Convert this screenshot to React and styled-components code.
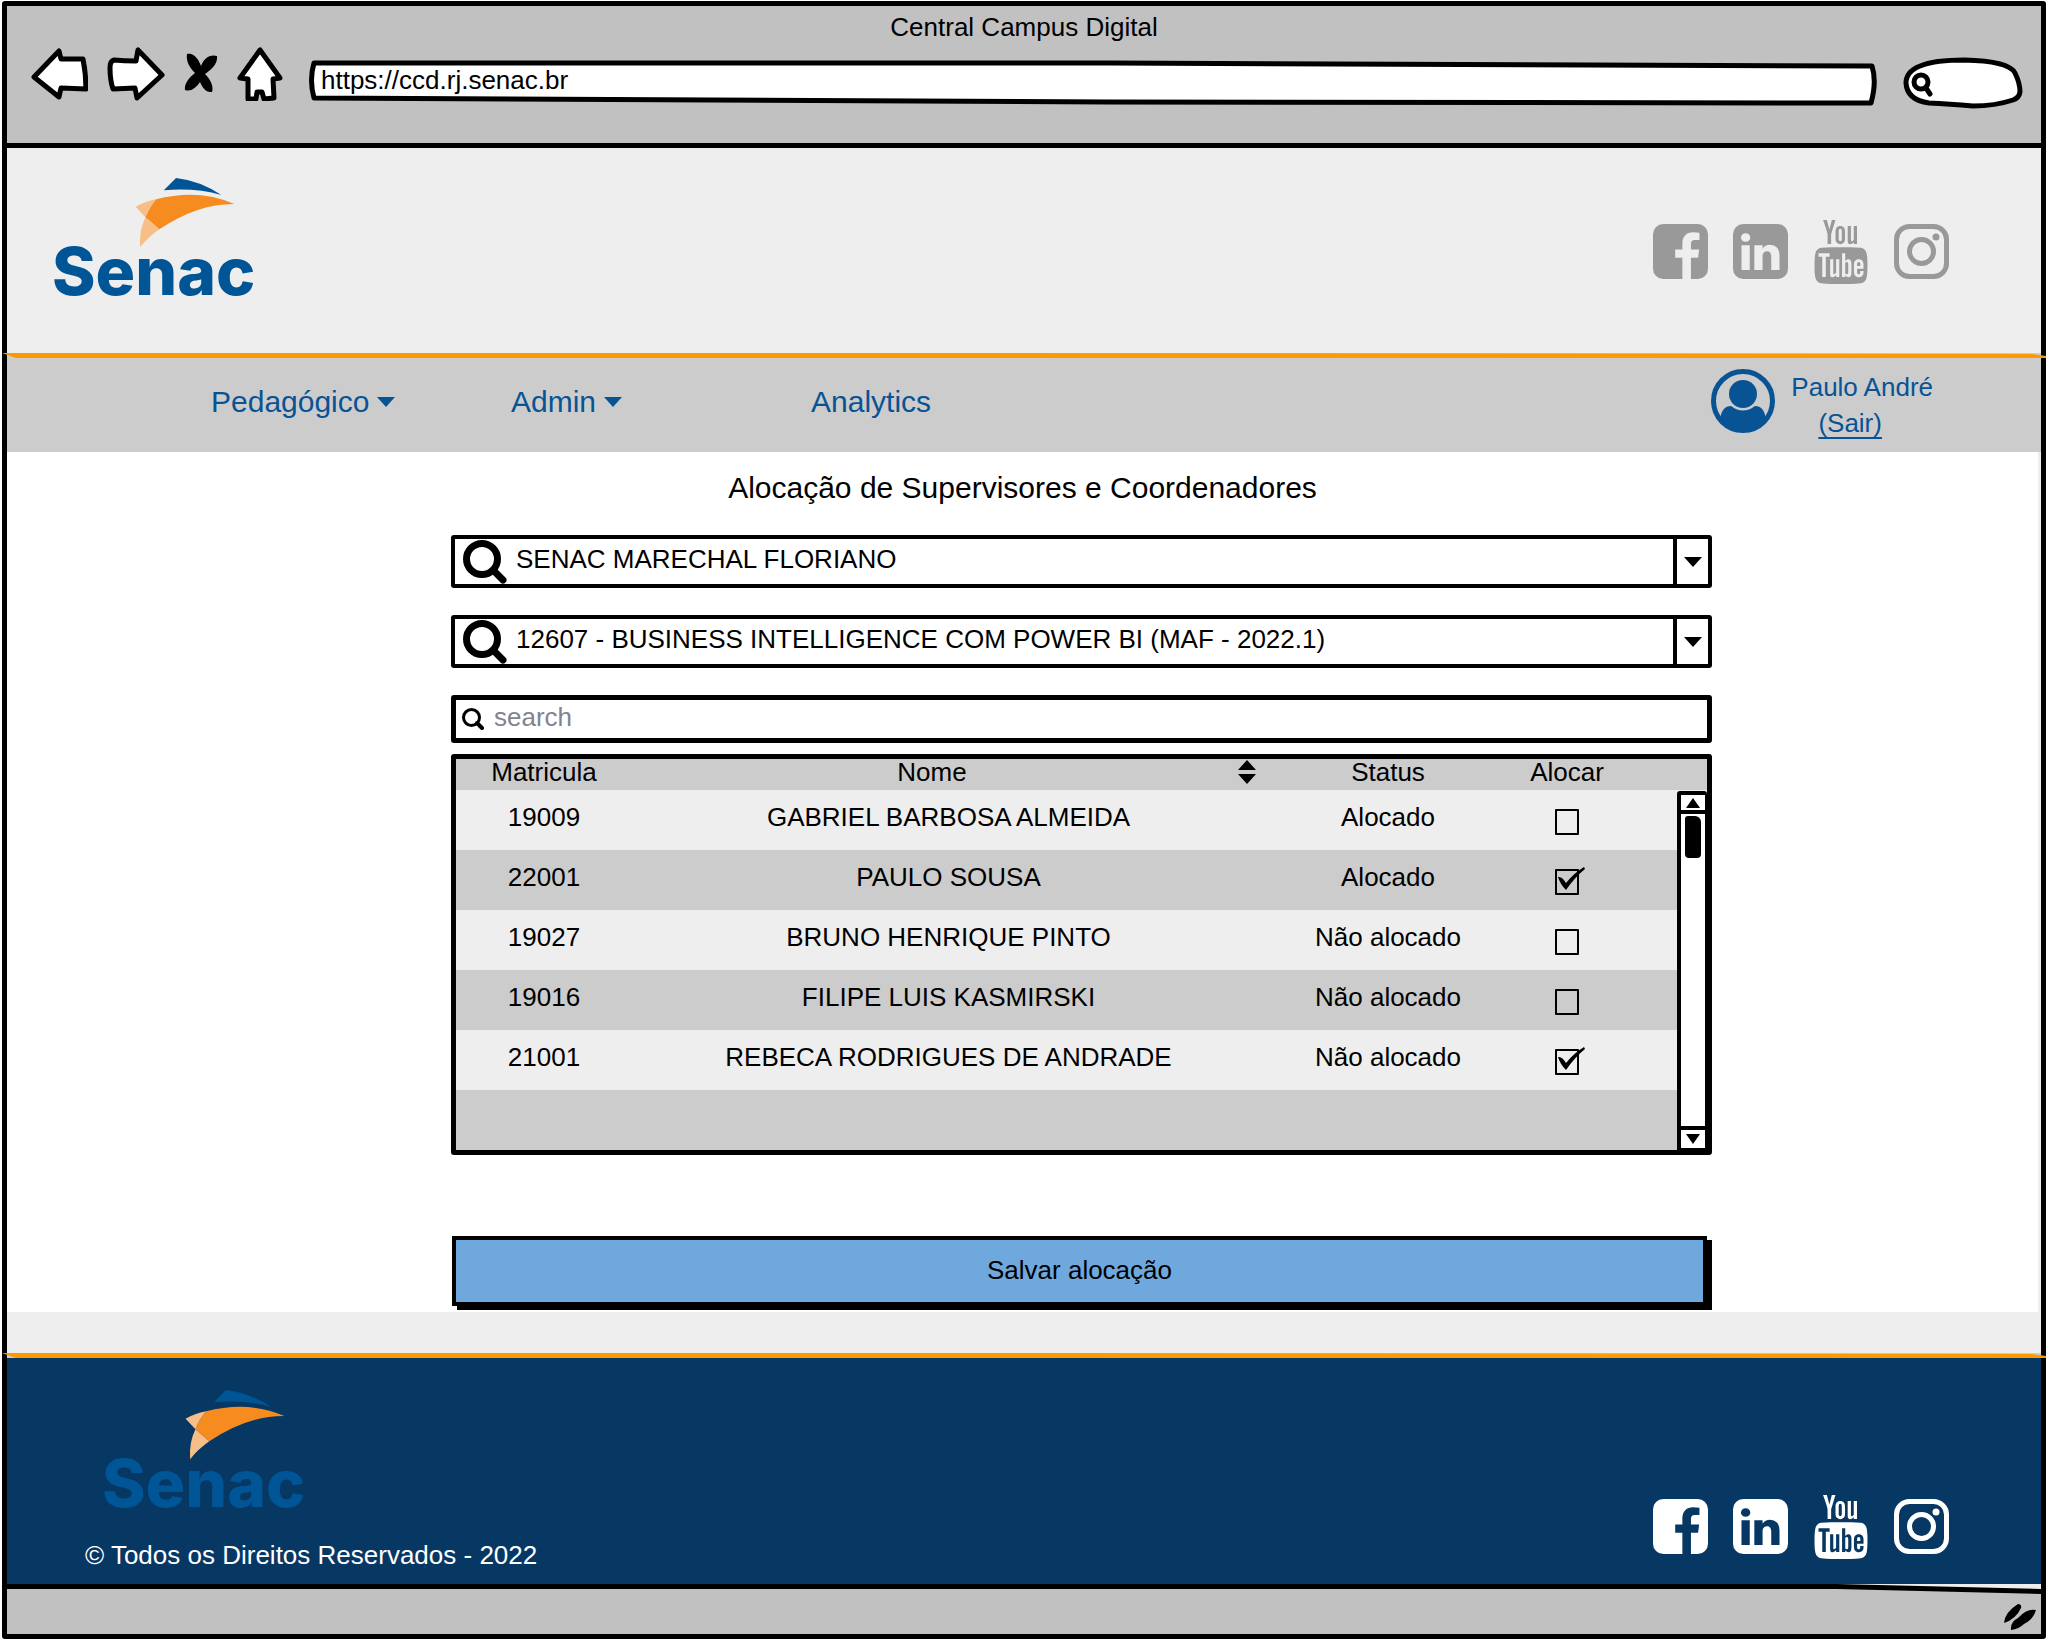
import React, { useState } from "react";
import styled, { createGlobalStyle } from "styled-components";
import { TfiYoutube } from "react-icons/tfi";

const GlobalStyle = createGlobalStyle`
  *, *::before, *::after { box-sizing: border-box; }
  body { margin: 0; background: #fff; }
  body, button, input, select, table {
    font-family: "Liberation Sans", Arial, sans-serif;
    font-size: 26px;
    line-height: 30px;
    color: #000;
  }
  button, input, select { margin: 0; padding: 0; border: 0; background: none; }
  button { cursor: pointer; }
  a { color: inherit; text-decoration: none; }
  svg { display: block; }
`;

const Page = styled.div`
  padding: 1px 4px 3px 2px;
`;

const Frame = styled.div`
  border: 5px solid #000;
  border-radius: 3px;
  background: #eee;
`;

/* Browser chrome */
const Chrome = styled.header`
  height: 142px;
  padding-top: 6px;
  background: #c1c1c1;
  border-bottom: 5px solid #000;
`;

const WindowTitle = styled.div`
  text-align: center;
`;

const Toolbar = styled.div`
  display: flex;
  align-items: center;
  gap: 26px;
  height: 72px;
  padding: 0 18px 0 24px;
`;

const Tools = styled.div`
  display: flex;
  align-items: center;
  gap: 19px;
  padding-bottom: 8px;
`;

const ToolButton = styled.button`
  display: block;
`;

const Address = styled.div`
  position: relative;
  flex: 1;
  height: 46px;
  margin-top: 10px;
`;

const SearchPill = styled.label`
  position: relative;
  width: 120px;
  height: 52px;
  margin-top: 8px;
`;

const Sketch = styled.svg`
  position: absolute;
  inset: 0;
  width: 100%;
  height: 100%;
  overflow: visible;
`;

const AddressInput = styled.input`
  position: relative;
  width: 100%;
  height: 40px;
  padding: 0 12px;
  outline: none;
`;

const PillInput = styled.input`
  position: relative;
  width: 100%;
  height: 100%;
  padding: 0 16px 0 34px;
  outline: none;
`;

/* Site header */
const Masthead = styled.div`
  display: flex;
  justify-content: space-between;
  align-items: flex-start;
  height: 205px;
  padding: 30px 92px 0 45px;
`;

const MastheadSocial = styled.div`
  padding-top: 46px;
`;

const SocialList = styled.div`
  display: flex;
  align-items: center;
  gap: 25px;
  color: ${(p) => p.$color};
`;

const SocialLink = styled.a`
  display: flex;
  align-items: center;
  justify-content: center;
  width: ${(p) => p.$width || "55px"};
  height: 55px;
  & > svg { flex: none; }
`;

const Rule = styled.svg`
  position: relative;
  width: calc(100% + 10px);
  height: 5px;
  margin: 0 -5px;
  overflow: visible;
`;

const NavBar = styled.nav`
  display: flex;
  justify-content: space-between;
  align-items: center;
  height: 94px;
  padding: 0 108px 0 204px;
  background: #ccc;
  color: #085394;
`;

const Menu = styled.div`
  display: grid;
  grid-template-columns: repeat(3, 300px);
  padding-bottom: 6px;
`;

const MenuButton = styled.button`
  display: flex;
  align-items: center;
  gap: 8px;
  color: inherit;
  font-size: 30px;
  line-height: 36px;
`;

const MenuLink = styled.a`
  font-size: 30px;
  line-height: 36px;
`;

const Account = styled.div`
  display: flex;
  align-items: flex-start;
  gap: 16px;
`;

const AccountText = styled.div`
  display: flex;
  flex-direction: column;
  align-items: center;
  line-height: 36px;
`;

const SignOut = styled.a`
  margin-right: 24px;
  text-decoration: underline;
  text-decoration-thickness: 2px;
  text-underline-offset: 5px;
`;

/* Content */
const Main = styled.main`
  display: grid;
  grid-template-columns: 444fr 1261fr 326fr;
  height: 860px;
  margin-right: 3px;
  padding-top: 16px;
  background: #fff;
  align-content: start;
`;

const Heading = styled.h1`
  grid-column: 1 / -1;
  margin: 0;
  text-align: center;
  font-size: 30px;
  font-weight: 400;
  line-height: 40px;
`;

const Form = styled.form`
  grid-column: 2;
  display: flex;
  flex-direction: column;
  padding-top: 27px;
`;

const Combo = styled.label`
  position: relative;
  display: block;
  height: 53px;
  margin-bottom: 27px;
  border: 4px solid #000;
  border-radius: 3px;
`;

const ComboIcon = styled.svg`
  position: absolute;
  left: 8px;
  top: 0;
`;

const ComboSelect = styled.select`
  appearance: none;
  width: 100%;
  height: 100%;
  padding: 0 40px 6px 61px;
  outline: none;
`;

const ComboArrow = styled.span`
  position: absolute;
  top: 0;
  right: 0;
  bottom: 0;
  display: grid;
  place-items: center;
  width: 35px;
  border-left: 4px solid #000;
  pointer-events: none;
`;

const SearchBox = styled.label`
  display: flex;
  align-items: center;
  gap: 10px;
  height: 48px;
  margin-bottom: 11px;
  padding: 0 6px;
  border: 5px solid #000;
  border-radius: 3px;
`;

const SearchInput = styled.input`
  flex: 1;
  min-width: 0;
  padding-bottom: 4px;
  outline: none;
  &::placeholder { color: #84828e; opacity: 1; }
`;

const GridBox = styled.div`
  position: relative;
  border: 5px solid #000;
  border-radius: 3px;
`;

const Table = styled.table`
  width: 100%;
  border-collapse: collapse;
  table-layout: fixed;
  text-align: center;
`;

const HeadCell = styled.th`
  width: ${(p) => p.$width || "auto"};
  height: 31px;
  padding: 0 ${(p) => p.$trail || "0"} 5px 0;
  background: #ccc;
  font-weight: 400;
  line-height: 26px;
`;

const SortHead = styled.div`
  display: flex;
  align-items: center;
  gap: 6px;
  padding-right: 9px;
  & > span { flex: 1; }
`;

const SortButton = styled.button`
  display: block;
`;

const Row = styled.tr`
  height: 60px;
  background: #eee;
  &:nth-child(even) { background: #ccc; }
`;

const Cell = styled.td`
  padding: 0 0 6px;
`;

const CheckCell = styled.td`
  padding: 0 84px 0 0;
`;

const CheckWrap = styled.span`
  position: relative;
  display: inline-block;
  width: 24px;
  height: 26px;
  vertical-align: middle;
`;

const CheckInput = styled.input`
  appearance: none;
  display: block;
  width: 24px;
  height: 26px;
  border: 2px solid #000;
  border-radius: 1px;
`;

const Tick = styled.svg`
  position: absolute;
  left: 3px;
  top: -2px;
  pointer-events: none;
`;

const Scrollbar = styled.div`
  position: absolute;
  top: 32px;
  right: 0;
  bottom: 0;
  display: flex;
  flex-direction: column;
  width: 30px;
  border: solid #000;
  border-width: 4px 2px 2px 4px;
  border-radius: 3px 3px 0 0;
  background: #fff;
`;

const ScrollButton = styled.button`
  display: grid;
  place-items: center;
  height: ${(p) => (p.$end ? "22px" : "19px")};
  border: 0 solid #000;
  border-width: ${(p) => (p.$end ? "4px 0 0" : "0 0 4px")};
`;

const Track = styled.div`
  flex: 1;
  padding: 2px 4px;
`;

const Thumb = styled.div`
  height: 42px;
  border-radius: 3px 6px 4px 4px;
  background: #000;
`;

const SaveButton = styled.button`
  height: 70px;
  margin: 81px 5px 0 1px;
  padding-bottom: 2px;
  border: 4px solid #000;
  background: #6fa8dc;
  box-shadow: 5px 4px 0 #000;
`;

/* Footer */
const Band = styled.div`
  height: 41px;
`;

const Footer = styled.footer`
  display: flex;
  justify-content: space-between;
  align-items: flex-end;
  height: 226px;
  padding: 0 92px 14px 78px;
  background: #073763;
  color: #fff;
`;

const FooterBrand = styled.div`
  display: flex;
  flex-direction: column;
  gap: 26px;
`;

const FooterLogo = styled.div`
  padding-left: 17px;
`;

const FooterSocial = styled.div`
  padding-bottom: 16px;
`;

const StatusBar = styled.div`
  display: flex;
  flex-direction: column;
  align-items: flex-end;
  height: 50px;
  background: #c1c1c1;
`;

const StatusEdge = styled.svg`
  width: 100%;
  height: 10px;
`;

const Grip = styled.svg`
  margin: 9px 4px 0 0;
`;

function Logo() {
  return (
    <svg width="220" height="124" viewBox="0 0 220 124" overflow="visible" role="img" aria-label="Senac">
      <g transform="scale(0.408 0.3333) translate(-128 -533)">
        <path fill="#005596" d="M402 570L432 533Q490 541 543 584Q480 562 402 570Z" />
        <path fill="#f68b1f" d="M383 597Q487 564 575 611Q485 610 391 687L357 651Q367 620 383 597Z" />
        <path fill="#f7be87" d="M333 619Q355 604 383 597Q367 620 357 651Z" />
        <path fill="#f7be87" d="M357 651L391 687Q362 712 344 741Q341 690 357 651Z" />
      </g>
      <text x="0" y="117" fill="#005596" fontFamily="Inter, sans-serif" fontWeight="800" fontSize="66">Senac</text>
    </svg>
  );
}

function Facebook() {
  return (
    <svg width="55" height="55" viewBox="0 128 1536 1536" fill="currentColor">
      <path d="M1248 128q119 0 203.500 84.500t84.500 203.500v960q0 119-84.500 203.500t-203.500 84.500h-188v-595h199l30-232h-229v-148q0-56 23.500-84t91.500-28l122-1v-207q-63-9-178-9-136 0-217.500 80t-81.500 226v171h-200v232h200v595h-532q-119 0-203.500-84.500t-84.500-203.500v-960q0-119 84.500-203.500t203.500-84.500h960z" />
    </svg>
  );
}

function LinkedIn() {
  return (
    <svg width="55" height="55" viewBox="0 128 1536 1536" fill="currentColor" fillRule="evenodd">
      <path d="M237 1414h231v-694h-231v694zM483 506q-1-52-36-86t-93-34-94.500 34-36.500 86q0 51 35.500 85.500t92.500 34.500h1q59 0 95-34.500t36-85.500zM1068 1414h231v-398q0-154-73-233t-193-79q-136 0-209 117h2v-101h-231q3 66 0 694h231v-388q0-38 7-56 15-35 45-59.500t74-24.500q116 0 116 157v371zM1536 416v960q0 119-84.500 203.500t-203.500 84.500h-960q-119 0-203.500-84.500t-84.500-203.500v-960q0-119 84.500-203.500t203.500-84.500h960q119 0 203.500 84.500t84.500 203.500z" />
    </svg>
  );
}

function Instagram() {
  return (
    <svg width="55" height="55" viewBox="0 0 55 55" fill="none" stroke="currentColor" strokeWidth="5">
      <rect x="2.500" y="2.500" width="50" height="50" rx="13" />
      <circle cx="27.500" cy="27.500" r="12" />
      <circle cx="42" cy="13" r="3.500" fill="currentColor" stroke="none" />
    </svg>
  );
}

function Social({ color }) {
  return (
    <SocialList $color={color}>
      <SocialLink href="#facebook" aria-label="Facebook"><Facebook /></SocialLink>
      <SocialLink href="#linkedin" aria-label="LinkedIn"><LinkedIn /></SocialLink>
      <SocialLink href="#youtube" aria-label="YouTube" $width="56px"><TfiYoutube size={64} /></SocialLink>
      <SocialLink href="#instagram" aria-label="Instagram"><Instagram /></SocialLink>
    </SocialList>
  );
}

function Triangle({ width = 18, height = 10, up = false }) {
  return (
    <svg width={width} height={height} viewBox="0 0 18 10" preserveAspectRatio="none" fill="currentColor">
      <path d={up ? "M0 10L9 0L18 10Z" : "M0 0H18L9 10Z"} />
    </svg>
  );
}

function Divider() {
  return (
    <Rule viewBox="0 0 2044 5" preserveAspectRatio="none" aria-hidden="true">
      <path fill="#ccc" d="M5 0H2039V5H5Z" />
      <path fill="#ff9900" d="M0 0H1000L2030 1L2044 3V5H14Z" />
    </Rule>
  );
}

function ComboField({ label, value }) {
  return (
    <Combo>
      <ComboIcon width="46" height="45" viewBox="0 0 46 45" fill="none" stroke="#000">
        <circle cx="19" cy="20" r="15.500" strokeWidth="7" />
        <path d="M31 32L40 41" strokeWidth="7" strokeLinecap="round" />
      </ComboIcon>
      <ComboSelect aria-label={label} defaultValue={value}>
        <option>{value}</option>
      </ComboSelect>
      <ComboArrow><Triangle /></ComboArrow>
    </Combo>
  );
}

const people = [
  ["19009", "GABRIEL BARBOSA ALMEIDA", "Alocado", false],
  ["22001", "PAULO SOUSA", "Alocado", true],
  ["19027", "BRUNO HENRIQUE PINTO", "Não alocado", false],
  ["19016", "FILIPE LUIS KASMIRSKI", "Não alocado", false],
  ["21001", "REBECA RODRIGUES DE ANDRADE", "Não alocado", true],
];

function AllocateCheck({ name, initial }) {
  const [checked, setChecked] = useState(initial);
  return (
    <CheckWrap>
      <CheckInput
        type="checkbox"
        aria-label={`Alocar ${name}`}
        checked={checked}
        onChange={(e) => setChecked(e.target.checked)}
      />
      {checked && (
        <Tick width="28" height="24" viewBox="0 0 28 24">
          <path d="M0 10Q4 9 8 16Q16 6 26 0L27 2Q17 10 8 23Q2 17 0 10Z" />
        </Tick>
      )}
    </CheckWrap>
  );
}

export default function App() {
  return (
    <Page>
      <GlobalStyle />
      <Frame>
        <Chrome>
          <WindowTitle>Central Campus Digital</WindowTitle>
          <Toolbar>
            <Tools>
              <ToolButton aria-label="Voltar">
                <svg width="57" height="52" viewBox="30 47 57 52" fill="#fff" stroke="#000" strokeWidth="5" strokeLinejoin="round">
                  <path d="M33 76L58 50L60 58L82 58Q85 73 85 88L60 87L58 96Z" />
                </svg>
              </ToolButton>
              <ToolButton aria-label="Avançar">
                <svg width="58" height="54" viewBox="105 47 58 54" fill="#fff" stroke="#000" strokeWidth="5" strokeLinejoin="round">
                  <path d="M112 60Q108 61 108 68Q108 80 111 89L133 88L135 98L160 75L136 50L134 61Q122 61 112 60Z" />
                </svg>
              </ToolButton>
              <ToolButton aria-label="Parar">
                <svg width="34" height="42" viewBox="187 51 34 42">
                  <path d="M190 52C197 50 202 58 204 64C207 56 213 52 220 54C221 62 214 68 208 72C213 77 217 84 215 90C209 91 205 85 203 80C199 86 194 90 188 88C187 81 193 75 198 71C192 65 189 59 190 52Z" />
                </svg>
              </ToolButton>
              <ToolButton aria-label="Início">
                <svg width="46" height="54" viewBox="237 46 46 54" fill="#fff" stroke="#000" strokeWidth="5" strokeLinejoin="round">
                  <path d="M260 49L240 77L248 78L248 98L256 98L257 91L262 91L264 98L274 97L273 78L280 77Z" />
                </svg>
              </ToolButton>
            </Tools>
            <Address>
              <Sketch viewBox="0 0 1566 46" preserveAspectRatio="none" fill="#fff" stroke="#000" strokeWidth="5" strokeLinejoin="round">
                <path d="M5 3Q0 20 5 38L800 42L1560 43Q1566 22 1561 6L800 3Z" />
              </Sketch>
              <AddressInput aria-label="Endereço" defaultValue="https://ccd.rj.senac.br" />
            </Address>
            <SearchPill>
              <Sketch viewBox="0 0 120 52" fill="none" stroke="#000" strokeWidth="5">
                <path fill="#fff" d="M26 47Q4 44 3 27Q3 4 61 4Q106 5 112 17Q117 27 117 36Q116 42 110 44Q92 50 70 50Q46 48 26 47Z" />
                <circle cx="18" cy="26" r="7" />
                <path d="M23 32L27 38" strokeLinecap="round" />
              </Sketch>
              <PillInput aria-label="Pesquisar" />
            </SearchPill>
          </Toolbar>
        </Chrome>

        <Masthead>
          <Logo />
          <MastheadSocial><Social color="#999" /></MastheadSocial>
        </Masthead>
        <Divider />
        <NavBar>
          <Menu>
            <MenuButton>Pedagógico<Triangle /></MenuButton>
            <MenuButton>Admin<Triangle /></MenuButton>
            <MenuLink href="#analytics">Analytics</MenuLink>
          </Menu>
          <Account>
            <svg width="64" height="64" viewBox="0 0 64 64">
              <circle cx="32" cy="32" r="29.500" fill="none" stroke="#085394" strokeWidth="5" />
              <circle cx="32" cy="25" r="14" fill="#085394" />
              <path fill="#085394" d="M9 50Q11 37 20 37Q32 46 44 37Q53 37 55 50Q46 62 32 62Q18 62 9 50Z" />
            </svg>
            <AccountText>
              <span>Paulo André</span>
              <SignOut href="#sair">(Sair)</SignOut>
            </AccountText>
          </Account>
        </NavBar>

        <Main>
          <Heading>Alocação de Supervisores e Coordenadores</Heading>
          <Form onSubmit={(e) => e.preventDefault()}>
            <ComboField label="Unidade" value="SENAC MARECHAL FLORIANO" />
            <ComboField label="Turma" value="12607 - BUSINESS INTELLIGENCE COM POWER BI (MAF - 2022.1)" />
            <SearchBox>
              <svg width="22" height="22" viewBox="0 0 22 22" fill="none" stroke="#000">
                <circle cx="9.500" cy="9.500" r="8" strokeWidth="3" />
                <path d="M15 15L20 20" strokeWidth="4" strokeLinecap="round" />
              </svg>
              <SearchInput type="search" placeholder="search" aria-label="Buscar pessoa" />
            </SearchBox>
            <GridBox>
              <Table>
                <thead>
                  <tr>
                    <HeadCell $width="176px">Matricula</HeadCell>
                    <HeadCell>
                      <SortHead>
                        <span>Nome</span>
                        <SortButton type="button" aria-label="Ordenar por nome">
                          <svg width="18" height="24" viewBox="0 0 18 24">
                            <path d="M0 10L9 0L18 10ZM0 14H18L9 24Z" />
                          </svg>
                        </SortButton>
                      </SortHead>
                    </HeadCell>
                    <HeadCell $width="246px">Status</HeadCell>
                    <HeadCell $width="196px" $trail="84px">Alocar</HeadCell>
                  </tr>
                </thead>
                <tbody>
                  {people.map(([id, name, status, checked]) => (
                    <Row key={id}>
                      <Cell>{id}</Cell>
                      <Cell>{name}</Cell>
                      <Cell>{status}</Cell>
                      <CheckCell><AllocateCheck name={name} initial={checked} /></CheckCell>
                    </Row>
                  ))}
                  <Row><Cell colSpan="4" /></Row>
                </tbody>
              </Table>
              <Scrollbar>
                <ScrollButton type="button" aria-label="Rolar para cima"><Triangle width={14} up /></ScrollButton>
                <Track><Thumb /></Track>
                <ScrollButton type="button" $end aria-label="Rolar para baixo"><Triangle width={14} /></ScrollButton>
              </Scrollbar>
            </GridBox>
            <SaveButton type="submit">Salvar alocação</SaveButton>
          </Form>
        </Main>

        <Band />
        <Divider />
        <Footer>
          <FooterBrand>
            <FooterLogo><Logo /></FooterLogo>
            <span>© Todos os Direitos Reservados - 2022</span>
          </FooterBrand>
          <FooterSocial><Social color="#fff" /></FooterSocial>
        </Footer>
        <StatusBar>
          <StatusEdge viewBox="0 0 2034 10" preserveAspectRatio="none" aria-hidden="true">
            <path fill="#eee" d="M1800 0H2034V6Z" />
            <path d="M0 0H1830L2034 5V10L1830 5H500L0 5Z" />
          </StatusEdge>
          <Grip width="34" height="28" viewBox="2004 1603 34 28">
            <path d="M2005 1623Q2006 1612 2019 1604Q2023 1604 2022 1608Q2017 1619 2005 1623ZM2012 1630Q2011 1622 2019 1618Q2028 1608 2037 1610Q2034 1620 2025 1624Q2020 1629 2012 1630Z" />
          </Grip>
        </StatusBar>
      </Frame>
    </Page>
  );
}
